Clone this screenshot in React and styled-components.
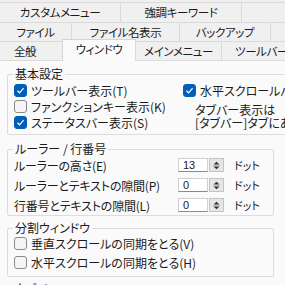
import React from 'react'
import styled, { createGlobalStyle } from 'styled-components'

const Global = createGlobalStyle`
  html, body {
    margin: 0;
    padding: 0;
    background: #f0f0f0;
    overflow: hidden;
  }
  body {
    font-family: "Noto Sans CJK JP", "Noto Sans", sans-serif;
    font-size: 12px;
    font-feature-settings: "palt";
    color: #1b1b1b;
  }
`

const tabRows = [
  [
    { label: 'カスタムメニュー', w: 121 },
    { label: '強調キーワード', w: 121 },
    { label: '支援', w: 121 },
  ],
  [
    { label: 'ファイル', w: 72 },
    { label: 'ファイル名表示', w: 108 },
    { label: 'バックアップ', w: 91 },
    { label: '', w: 60 },
  ],
  [
    { label: '全般', w: 75, shift: -12 },
    { label: 'ウィンドウ', w: 73, active: true },
    { label: 'メインメニュー', w: 86 },
    { label: 'ツールバー', w: 80 },
  ],
]

const Window = styled.div`
  width: 285px;
  height: 285px;
  display: flex;
  flex-direction: column;
  padding-top: 2px;
  box-sizing: border-box;
  overflow: hidden;
`

const TabRow = styled.div`
  display: flex;
  height: 19px;
  flex-shrink: 0;
  &:first-child { height: 20px; }
`

const Tab = styled.div`
  flex: 0 0 ${p => p.$w}px;
  box-sizing: border-box;
  display: flex;
  align-items: center;
  justify-content: center;
  white-space: nowrap;
  overflow: hidden;
  background: #f0f0f0;
  border-top: 1px solid #dadada;
  border-right: 1px solid #dadada;
  font-size: 11.5px;
  letter-spacing: -0.4px;
  line-height: 1;
  padding-top: 1px;
  position: relative;
  ${p => p.$shift ? `margin-left: ${p.$shift}px;` : ''}
  ${p => p.$active ? `
    background: #fafafa;
    margin-top: -2px;
    height: 22px;
    z-index: 2;
    border-top-color: #d4d4d4;
    border-left: 1px solid #d4d4d4;
    margin-left: -1px;
    flex-basis: ${p.$w + 1}px;
    padding-top: 0;
    padding-bottom: 2px;
  ` : ''}
`

const Panel = styled.div`
  flex: 1;
  background: #fafafa;
  border-top: 1px solid #dadada;
  padding-left: 7px;
  display: flex;
  flex-direction: column;
`

const Group = styled.div`
  position: relative;
  border: 1px solid #dcdcdc;
  border-radius: 2px;
  width: ${p => p.$w || 267}px;
  margin-top: ${p => p.$mt}px;
  padding: ${p => p.$pad};
  box-sizing: border-box;
  flex-shrink: 0;
`

const Legend = styled.span`
  position: absolute;
  top: -9px;
  left: 5px;
  padding: 0 2px;
  background: #fafafa;
  line-height: 16px;
  white-space: nowrap;
`

const Columns = styled.div`
  display: flex;
`

const Col = styled.div`
  display: flex;
  flex-direction: column;
  width: ${p => p.$w}px;
  flex-shrink: 0;
`

const CheckRow = styled.label`
  display: flex;
  align-items: center;
  gap: 4px;
  height: ${p => p.$h || 16}px;
  white-space: nowrap;
`

const Box = styled.span`
  width: 13px;
  height: 13px;
  box-sizing: border-box;
  border-radius: 3px;
  flex-shrink: 0;
  display: flex;
  align-items: center;
  justify-content: center;
  background: ${p => p.$on ? '#005fb8' : '#f5f5f5'};
  border: 1px solid ${p => p.$on ? '#005fb8' : '#8a8a8a'};
`

const Note = styled.div`
  margin-top: 5px;
  padding-left: 12px;
  line-height: 13px;
  white-space: nowrap;
`

const SpinRow = styled.div`
  display: flex;
  align-items: center;
  height: 20px;
  white-space: nowrap;
`

const SpinLabel = styled.span`
  width: 164px;
  flex-shrink: 0;
  letter-spacing: -0.2px;
`

const Spin = styled.div`
  display: flex;
  height: 14px;
`

const SpinInput = styled.div`
  width: 30px;
  box-sizing: border-box;
  background: #fff;
  border: 1px solid #d0d0d0;
  border-bottom-color: #8a8a8a;
  padding-left: 4px;
  font-size: 11px;
  line-height: 12px;
  font-family: "Liberation Sans", sans-serif;
`

const SpinButton = styled.div`
  width: 15px;
  margin-left: 1px;
  box-sizing: border-box;
  background: #e6e6e6;
  border: 1px solid #c4c4c4;
  display: flex;
  align-items: center;
  justify-content: center;
`

const Unit = styled.span`
  margin-left: 10px;
  font-size: 11px;
`

function Check({ on, children, h }) {
  return (
    <CheckRow $h={h}>
      <Box $on={on}>
        {on && (
          <svg width="9" height="9" viewBox="0 0 9 9">
            <path d="M1.5 4.8 L3.6 6.8 L7.6 2.2" fill="none" stroke="#fff" strokeWidth="1.2" />
          </svg>
        )}
      </Box>
      <span>{children}</span>
    </CheckRow>
  )
}

function SpinField({ label, value }) {
  return (
    <SpinRow>
      <SpinLabel>{label}</SpinLabel>
      <Spin>
        <SpinInput>{value}</SpinInput>
        <SpinButton>
          <svg width="7" height="9" viewBox="0 0 7 9">
            <path d="M0.5 3.5 L3.5 0.8 L6.5 3.5 Z M0.5 5.5 L3.5 8.2 L6.5 5.5 Z" fill="#333" />
            <path d="M0.5 4.5 H6.5" stroke="#999" strokeWidth="0.6" />
          </svg>
        </SpinButton>
      </Spin>
      <Unit>ドット</Unit>
    </SpinRow>
  )
}

export default function App() {
  return (
    <>
      <Global />
      <Window>
        {tabRows.map((row, i) => (
          <TabRow key={i}>
            {row.map((t, j) => (
              <Tab key={j} $w={t.w} $active={t.active} $shift={t.shift}>{t.label}</Tab>
            ))}
          </TabRow>
        ))}
        <Panel>
          <Group $mt={13} $w={330} $pad="7px 6px 4px">
            <Legend>基本設定</Legend>
            <Columns>
              <Col $w={169}>
                <Check on>ツールバー表示(T)</Check>
                <Check>ファンクションキー表示(K)</Check>
                <Check on>ステータスバー表示(S)</Check>
              </Col>
              <Col $w={140}>
                <Check on>水平スクロールバー表示</Check>
                <Note>
                  タブバー表示は<br />[タブバー]タブにあります
                </Note>
              </Col>
            </Columns>
          </Group>
          <Group $mt={14} $pad="5px 6px 0">
            <Legend>ルーラー / 行番号</Legend>
            <SpinField label="ルーラーの高さ(E)" value="13" />
            <SpinField label="ルーラーとテキストの隙間(P)" value="0" />
            <SpinField label="行番号とテキストの隙間(L)" value="0" />
          </Group>
          <Group $mt={12} $pad="5px 6px 4px">
            <Legend>分割ウィンドウ</Legend>
            <Check h={19}>垂直スクロールの同期をとる(V)</Check>
            <Check h={19}>水平スクロールの同期をとる(H)</Check>
          </Group>
          <Group $mt={12} $pad="5px 6px 4px">
            <Legend>タブバー</Legend>
          </Group>
        </Panel>
      </Window>
    </>
  )
}
